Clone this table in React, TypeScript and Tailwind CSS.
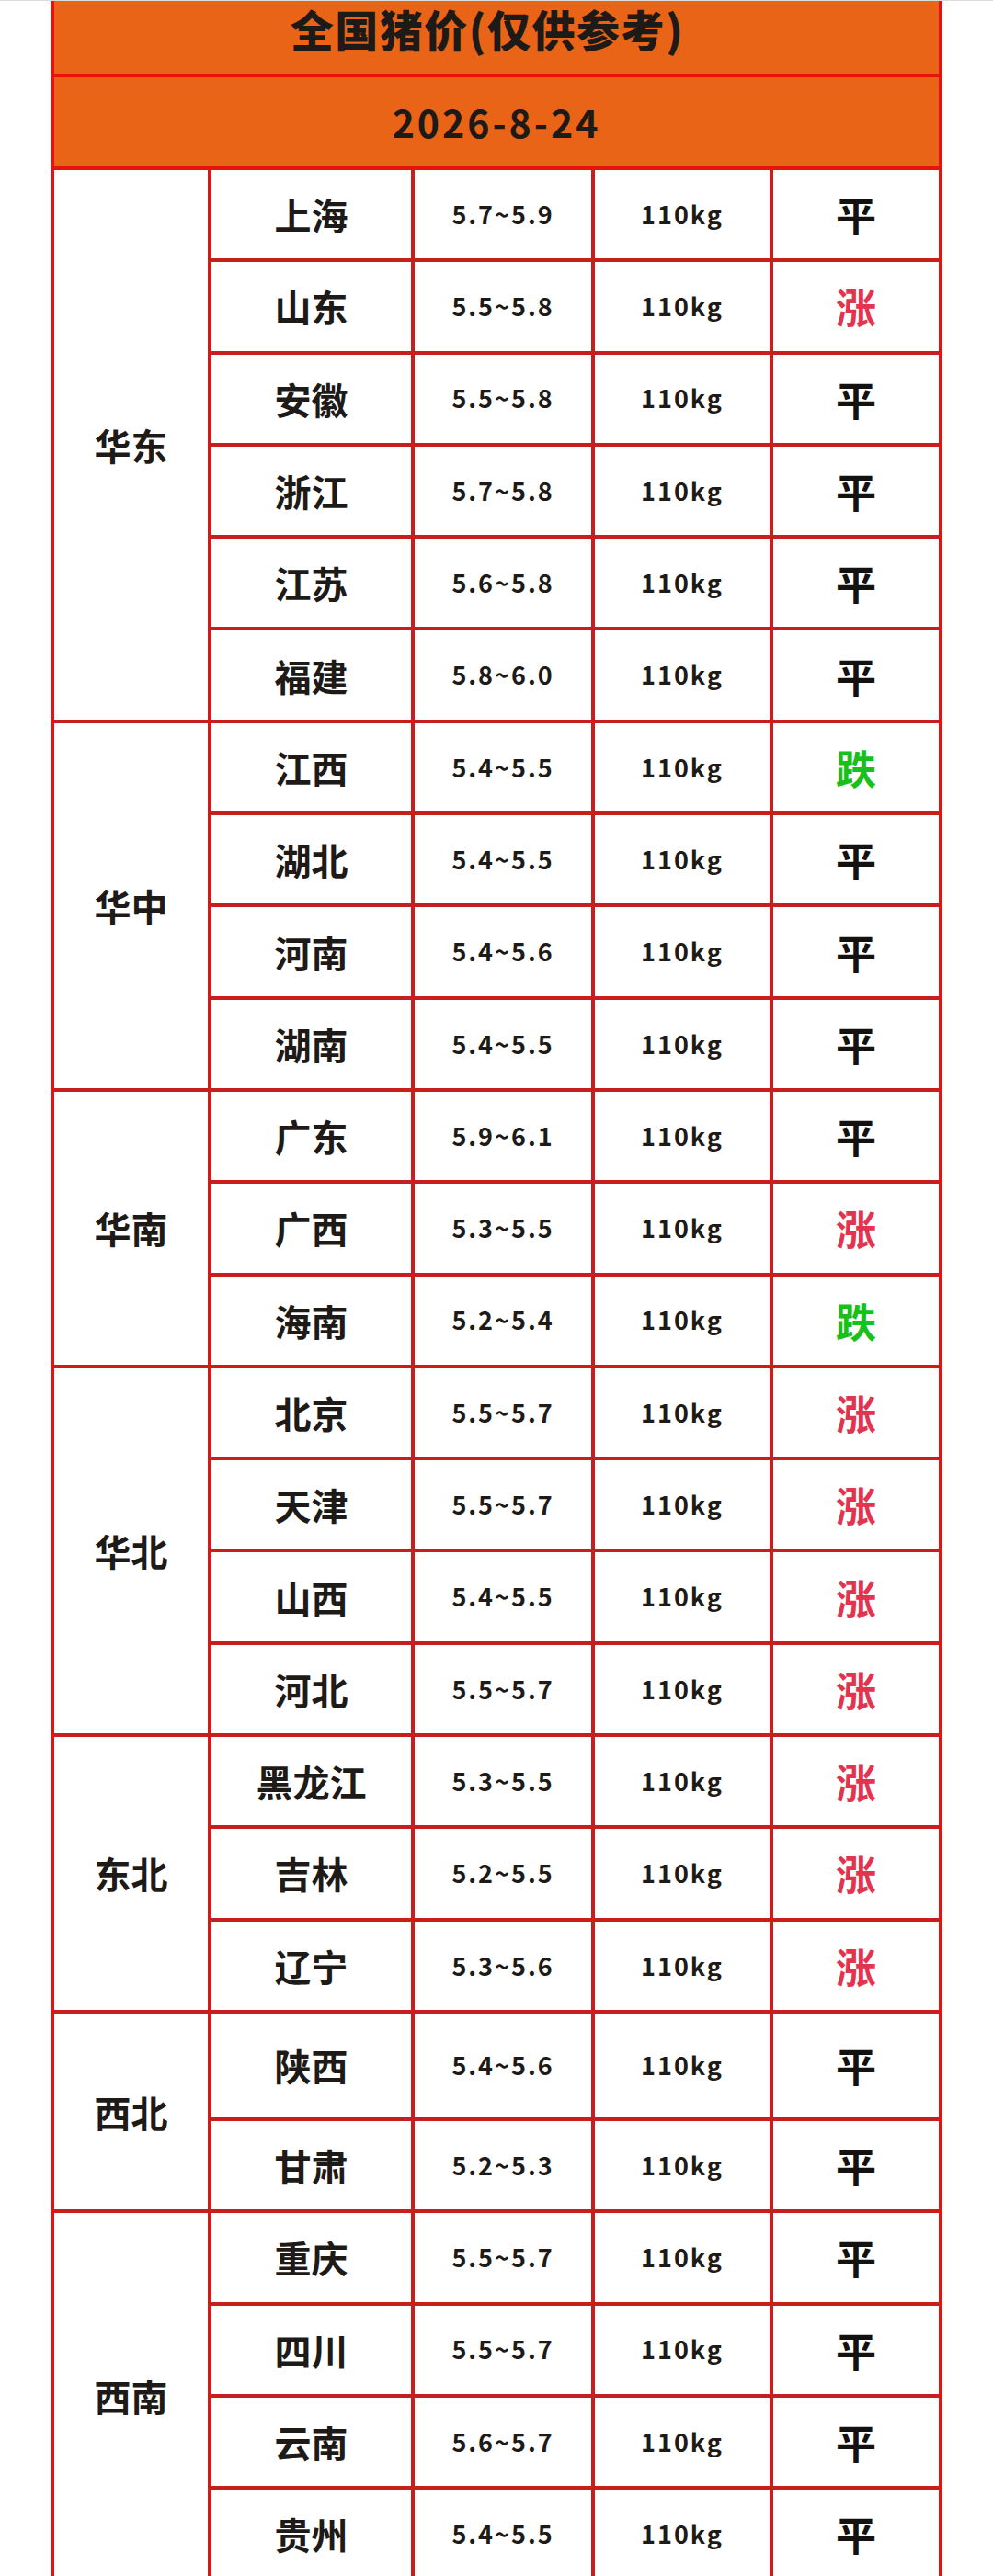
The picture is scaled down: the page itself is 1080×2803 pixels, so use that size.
const regions: { name: string; span: string; rows: [string, string, string][] }[] = [
  {
    name: '华东',
    span: 'row-span-6',
    rows: [
      ['上海', '5.7~5.9', '平'],
      ['山东', '5.5~5.8', '涨'],
      ['安徽', '5.5~5.8', '平'],
      ['浙江', '5.7~5.8', '平'],
      ['江苏', '5.6~5.8', '平'],
      ['福建', '5.8~6.0', '平'],
    ],
  },
  {
    name: '华中',
    span: 'row-span-4',
    rows: [
      ['江西', '5.4~5.5', '跌'],
      ['湖北', '5.4~5.5', '平'],
      ['河南', '5.4~5.6', '平'],
      ['湖南', '5.4~5.5', '平'],
    ],
  },
  {
    name: '华南',
    span: 'row-span-3',
    rows: [
      ['广东', '5.9~6.1', '平'],
      ['广西', '5.3~5.5', '涨'],
      ['海南', '5.2~5.4', '跌'],
    ],
  },
  {
    name: '华北',
    span: 'row-span-4',
    rows: [
      ['北京', '5.5~5.7', '涨'],
      ['天津', '5.5~5.7', '涨'],
      ['山西', '5.4~5.5', '涨'],
      ['河北', '5.5~5.7', '涨'],
    ],
  },
  {
    name: '东北',
    span: 'row-span-3',
    rows: [
      ['黑龙江', '5.3~5.5', '涨'],
      ['吉林', '5.2~5.5', '涨'],
      ['辽宁', '5.3~5.6', '涨'],
    ],
  },
  {
    name: '西北',
    span: 'row-span-2',
    rows: [
      ['陕西', '5.4~5.6', '平'],
      ['甘肃', '5.2~5.3', '平'],
    ],
  },
  {
    name: '西南',
    span: 'row-span-4',
    rows: [
      ['重庆', '5.5~5.7', '平'],
      ['四川', '5.5~5.7', '平'],
      ['云南', '5.6~5.7', '平'],
      ['贵州', '5.4~5.5', '平'],
    ],
  },
];

const trendColor: Record<string, string> = {
  平: 'text-[#141210]',
  涨: 'text-[#e2344e]',
  跌: 'text-[#19c019]',
};

const font = { fontFamily: '"Noto Sans CJK SC", "Noto Sans", sans-serif' };

export default function App() {
  return (
    <div className="min-h-screen bg-white text-[#1d1a17]" style={font}>
      <div className="h-px w-full bg-[#dcdcdc]" />
      <div className="ml-[55px] w-[970px] border-x-[4px] border-[#e11313]">
        {/* titre */}
        <div className="flex h-[79px] items-center justify-center bg-[#ea6417] pb-[18px] pr-[20px] text-[47px] font-black tracking-[1.5px]">
          全国猪价(仅供参考)
        </div>
        <div className="h-[4px] bg-[#e8130f]" />
        <div className="flex h-[97px] items-center justify-center bg-[#ea6417] text-[41px] font-bold tracking-[3px]">
          2026-8-24
        </div>
        <div className="h-[4px] bg-[#e8130f]" />

        {/* tableau */}
        <div className="grid grid-cols-[167px_217px_192px_190px_180px] grid-rows-[repeat(20,96.3px)_113px_repeat(5,96.3px)] gap-[4px] bg-[#c81e1e]">
          {regions.map(r => (
            <div key={r.name} className="contents">
              <div className={`${r.span} col-start-1 flex items-center justify-center bg-white text-[40px] font-bold`}>
                {r.name}
              </div>
              {r.rows.map(([prov, prix, tendance]) => (
                <div key={prov} className="contents">
                  <div className="col-start-2 flex items-center justify-center bg-white text-[40px] font-bold">
                    {prov}
                  </div>
                  <div className="flex items-center justify-center bg-white text-[27px] font-bold tracking-[2px]">
                    {prix}
                  </div>
                  <div className="flex items-center justify-center bg-white text-[27px] font-bold tracking-[2px]">
                    110kg
                  </div>
                  <div className={`flex items-center justify-center bg-white text-[44px] font-bold ${trendColor[tendance]}`}>
                    {tendance}
                  </div>
                </div>
              ))}
            </div>
          ))}
        </div>
      </div>
    </div>
  );
}
